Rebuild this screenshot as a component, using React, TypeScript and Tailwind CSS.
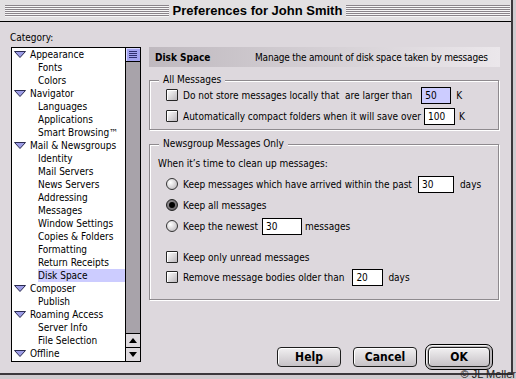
import React from 'react';

type Item = { label: string; top?: boolean; selected?: boolean };

const items: Item[] = [
  { label: 'Appearance', top: true },
  { label: 'Fonts' },
  { label: 'Colors' },
  { label: 'Navigator', top: true },
  { label: 'Languages' },
  { label: 'Applications' },
  { label: 'Smart Browsing™' },
  { label: 'Mail & Newsgroups', top: true },
  { label: 'Identity' },
  { label: 'Mail Servers' },
  { label: 'News Servers' },
  { label: 'Addressing' },
  { label: 'Messages' },
  { label: 'Window Settings' },
  { label: 'Copies & Folders' },
  { label: 'Formatting' },
  { label: 'Return Receipts' },
  { label: 'Disk Space', selected: true },
  { label: 'Composer', top: true },
  { label: 'Publish' },
  { label: 'Roaming Access', top: true },
  { label: 'Server Info' },
  { label: 'File Selection' },
  { label: 'Offline', top: true },
];

const Triangle = () => (
  <svg width="12" height="7" viewBox="0 0 12 7" className="shrink-0">
    <path d="M0.5 0.5 L11.5 0.5 L6 6.5 Z" fill="#9c9ce6" stroke="#2a2a50" strokeWidth="1" />
  </svg>
);

const Stripes = () => (
  <div className="flex-1 h-[12px] bg-[repeating-linear-gradient(to_bottom,#8a848a_0px,#8a848a_1px,#f6f6f6_1px,#f6f6f6_2px)]" />
);

const Checkbox = () => (
  <span className="inline-block shrink-0 w-[12px] h-[12px] border border-[#262626] rounded-[1px] bg-linear-to-br from-white to-[#bcb8bc] shadow-[inset_1px_1px_0_#fff]" />
);

const Radio = ({ on }: { on?: boolean }) => (
  <span
    className={
      on
        ? 'shrink-0 w-[12px] h-[12px] rounded-full border border-[#222] bg-[radial-gradient(circle_at_35%_35%,#9a969a,#5a565a)] flex items-center justify-center'
        : 'shrink-0 w-[12px] h-[12px] rounded-full border border-[#333] bg-[radial-gradient(circle_at_35%_35%,#ffffff,#b4b0b4)]'
    }
  >
    {on && <span className="w-[6px] h-[6px] rounded-full bg-black" />}
  </span>
);

const Field = ({ value, w, focus }: { value: string; w: string; focus?: boolean }) => (
  <span
    className={`${w} h-[17px] border border-black flex items-center pl-[3px] ${
      focus ? 'bg-[#ccccff]' : 'bg-white'
    }`}
  >
    {value}
  </span>
);

const Button = ({ label }: { label: string }) => (
  <div className="w-[64px] h-[20px] border border-[#1e1e1e] rounded-[4px] bg-linear-to-b from-[#f2f0f2] to-[#c6c2c6] shadow-[inset_1px_1px_0_#fff] flex items-center justify-center font-bold text-[12px]">
    {label}
  </div>
);

export default function App() {
  return (
    <div className="w-[516px] h-[379px] bg-[#cfcbcf] relative overflow-hidden font-['DejaVu_Sans_Condensed','DejaVu_Sans',sans-serif] text-[10px] text-black">
      <div className="w-[513px] h-[375px] bg-[#ddd8dd] border-r-2 border-b-2 border-[#3c383c] flex flex-col">
        {/* title bar */}
        <div className="h-[22px] shrink-0 bg-[#e2e0e2] border-b border-black flex items-center pl-[5px] pr-[1px] gap-[4px]">
          <Stripes />
          <span className="font-['Liberation_Sans',sans-serif] font-bold text-[13px] leading-none">
            Preferences for John Smith
          </span>
          <Stripes />
        </div>

        <div className="flex pl-[11px] pt-[9px]">
          {/* category list */}
          <div className="w-[130px] flex flex-col">
            <div className="h-[16px] leading-[14px] -ml-[1px]">Category:</div>
            <div className="h-[315px] border border-black bg-white flex">
              <div className="w-[113px] flex flex-col">
                {items.map((it) => (
                  <div
                    key={it.label}
                    className={`h-[13px] leading-[13px] flex items-center ${
                      it.top ? 'pl-[2px] gap-[4px]' : 'pl-[26px]'
                    }`}
                  >
                    {it.top && <Triangle />}
                    <span className={it.selected ? 'bg-[#ccccff] flex-1' : ''}>{it.label}</span>
                  </div>
                ))}
              </div>
              <div className="w-[15px] border-l border-black bg-[#a8a3aa] flex flex-col">
                <div className="h-[14px] bg-[#a3a3f0] border-b border-black flex flex-col items-center justify-center gap-[1px] shadow-[inset_1px_1px_0_#d8d8ff]">
                  <span className="w-[8px] h-px bg-[#303070]" />
                  <span className="w-[8px] h-px bg-[#303070]" />
                  <span className="w-[8px] h-px bg-[#303070]" />
                  <span className="w-[8px] h-px bg-[#303070]" />
                </div>
                <div className="flex-1" />
                <div className="h-[14px] bg-[#dedade] border-t border-black flex items-center justify-center">
                  <svg width="8" height="5" viewBox="0 0 8 5">
                    <path d="M0 5 L8 5 L4 0 Z" fill="#000" />
                  </svg>
                </div>
                <div className="h-[14px] bg-[#dedade] border-t border-black flex items-center justify-center">
                  <svg width="8" height="5" viewBox="0 0 8 5">
                    <path d="M0 0 L8 0 L4 5 Z" fill="#000" />
                  </svg>
                </div>
              </div>
            </div>
          </div>

          {/* right panel */}
          <div className="ml-[8px] w-[351px] flex flex-col mt-[16px]">
            <div className="h-[20px] flex items-center bg-linear-to-r from-[#bfb9bf] to-[#ebe7eb]">
              <span className="w-[106px] pl-[6px] font-bold">Disk Space</span>
              <span className="tracking-[-0.2px]">Manage the amount of disk space taken by messages</span>
            </div>

            <div className="relative mt-[13px] w-[350px] h-[50px] border border-[#8e8a8e] shadow-[inset_1px_1px_0_#fff,1px_1px_0_#fff] flex flex-col pl-[16px] pt-[8px] gap-[9px]">
              <span className="absolute -top-[8px] left-[9px] px-[4px] bg-[#ddd8dd] leading-[14px]">All Messages</span>
              <div className="flex items-center h-[12px]">
                <Checkbox />
                <span className="ml-[5px]">Do not store messages locally that&nbsp; are larger than</span>
                <span className="ml-[9px]">
                  <Field value="50" w="w-[30px]" focus />
                </span>
                <span className="ml-[5px]">K</span>
              </div>
              <div className="flex items-center h-[12px]">
                <Checkbox />
                <span className="ml-[5px]">Automatically compact folders when it will save over</span>
                <span className="ml-[3px]">
                  <Field value="100" w="w-[31px]" />
                </span>
                <span className="ml-[4px]">K</span>
              </div>
            </div>

            <div className="relative mt-[14px] w-[350px] h-[156px] border border-[#8e8a8e] shadow-[inset_1px_1px_0_#fff,1px_1px_0_#fff] flex flex-col pl-[16px]">
              <span className="absolute -top-[8px] left-[9px] px-[4px] bg-[#ddd8dd] leading-[14px]">
                Newsgroup Messages Only
              </span>
              <div className="-ml-[8px] mt-[13px] h-[12px] leading-[12px]">When it’s time to clean up messages:</div>
              <div className="flex items-center h-[12px] mt-[8px]">
                <Radio />
                <span className="ml-[5px]">Keep messages which have arrived within the past</span>
                <span className="ml-[6px]">
                  <Field value="30" w="w-[36px]" />
                </span>
                <span className="ml-[6px]">days</span>
              </div>
              <div className="flex items-center h-[12px] mt-[9px]">
                <Radio on />
                <span className="ml-[5px]">Keep all messages</span>
              </div>
              <div className="flex items-center h-[12px] mt-[9px]">
                <Radio />
                <span className="ml-[5px]">Keep the newest</span>
                <span className="ml-[4px]">
                  <Field value="30" w="w-[40px]" />
                </span>
                <span className="ml-[3px]">messages</span>
              </div>
              <div className="flex items-center h-[12px] mt-[19px]">
                <Checkbox />
                <span className="ml-[5px]">Keep only unread messages</span>
              </div>
              <div className="flex items-center h-[12px] mt-[8px]">
                <Checkbox />
                <span className="ml-[5px]">Remove message bodies older than</span>
                <span className="ml-[8px]">
                  <Field value="20" w="w-[31px]" />
                </span>
                <span className="ml-[5px]">days</span>
              </div>
            </div>

            <div className="mt-[44px] flex items-center pl-[128px]">
              <Button label="Help" />
              <div className="ml-[12px]">
                <Button label="Cancel" />
              </div>
              <div className="ml-[8px] border border-black rounded-[7px] p-[2px] bg-[#bcb8bc] shadow-[inset_1px_1px_0_#f4f4f4]">
                <div className="w-[62px] h-[20px] border border-[#1e1e1e] rounded-[4px] bg-linear-to-b from-[#f2f0f2] to-[#c6c2c6] shadow-[inset_1px_1px_0_#fff] flex items-center justify-center font-bold text-[12px]">
                  OK
                </div>
              </div>
            </div>
          </div>
        </div>
      </div>
      <span className="absolute right-[0px] bottom-[0px] text-[11px] leading-[10px] text-[#222] font-['Liberation_Sans',sans-serif]">
        © JL Meller
      </span>
    </div>
  );
}
